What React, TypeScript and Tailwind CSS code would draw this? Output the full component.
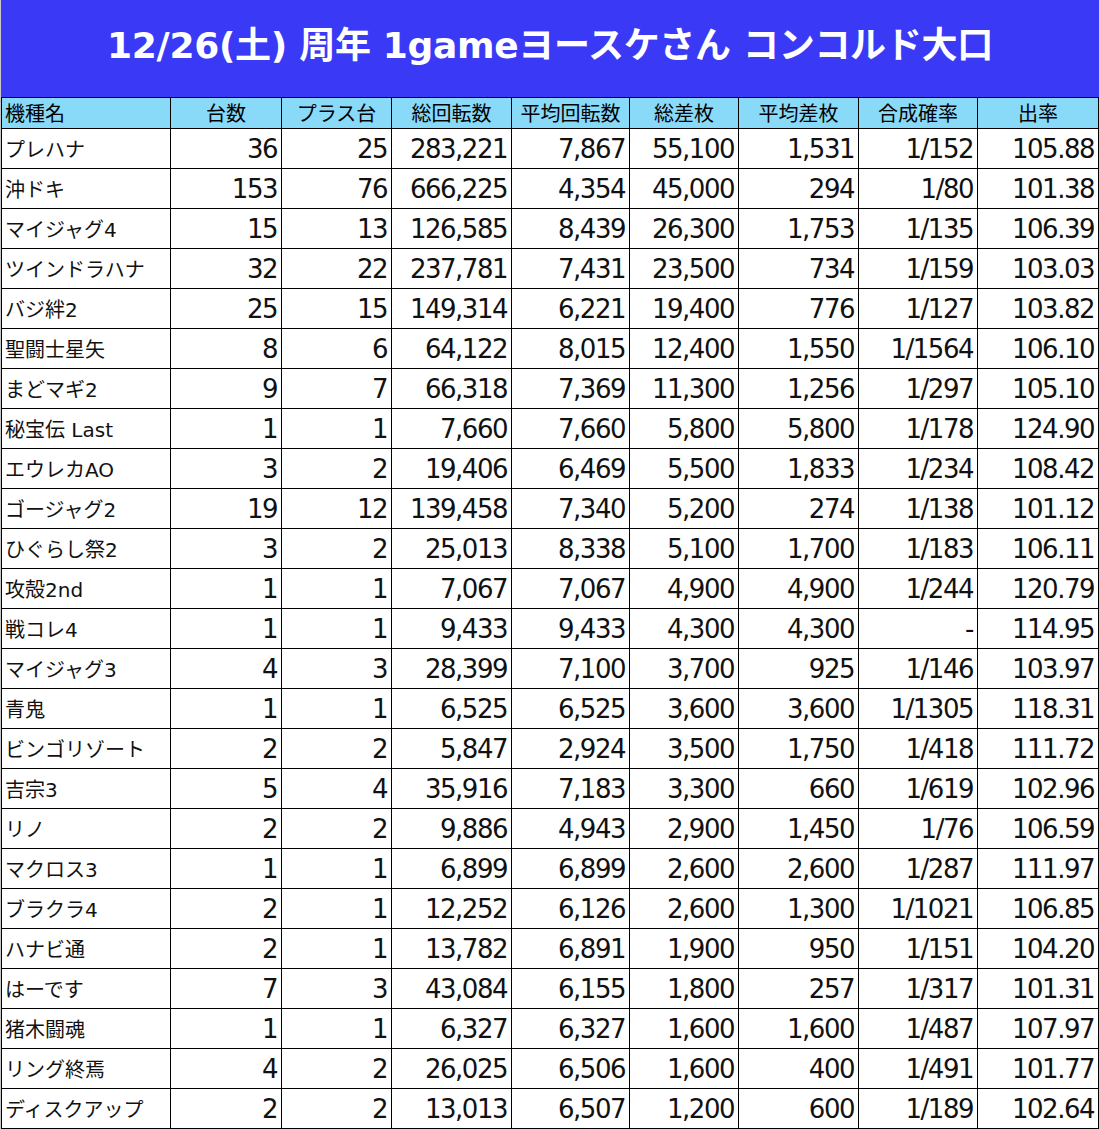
import React from "react";

const headers = [
  "機種名",
  "台数",
  "プラス台",
  "総回転数",
  "平均回転数",
  "総差枚",
  "平均差枚",
  "合成確率",
  "出率",
];

const widths = [169, 111, 110, 120, 118, 109, 120, 119, 121];

const rows: string[][] = [
  ["プレハナ", "36", "25", "283,221", "7,867", "55,100", "1,531", "1/152", "105.88"],
  ["沖ドキ", "153", "76", "666,225", "4,354", "45,000", "294", "1/80", "101.38"],
  ["マイジャグ4", "15", "13", "126,585", "8,439", "26,300", "1,753", "1/135", "106.39"],
  ["ツインドラハナ", "32", "22", "237,781", "7,431", "23,500", "734", "1/159", "103.03"],
  ["バジ絆2", "25", "15", "149,314", "6,221", "19,400", "776", "1/127", "103.82"],
  ["聖闘士星矢", "8", "6", "64,122", "8,015", "12,400", "1,550", "1/1564", "106.10"],
  ["まどマギ2", "9", "7", "66,318", "7,369", "11,300", "1,256", "1/297", "105.10"],
  ["秘宝伝 Last", "1", "1", "7,660", "7,660", "5,800", "5,800", "1/178", "124.90"],
  ["エウレカAO", "3", "2", "19,406", "6,469", "5,500", "1,833", "1/234", "108.42"],
  ["ゴージャグ2", "19", "12", "139,458", "7,340", "5,200", "274", "1/138", "101.12"],
  ["ひぐらし祭2", "3", "2", "25,013", "8,338", "5,100", "1,700", "1/183", "106.11"],
  ["攻殻2nd", "1", "1", "7,067", "7,067", "4,900", "4,900", "1/244", "120.79"],
  ["戦コレ4", "1", "1", "9,433", "9,433", "4,300", "4,300", "-", "114.95"],
  ["マイジャグ3", "4", "3", "28,399", "7,100", "3,700", "925", "1/146", "103.97"],
  ["青鬼", "1", "1", "6,525", "6,525", "3,600", "3,600", "1/1305", "118.31"],
  ["ビンゴリゾート", "2", "2", "5,847", "2,924", "3,500", "1,750", "1/418", "111.72"],
  ["吉宗3", "5", "4", "35,916", "7,183", "3,300", "660", "1/619", "102.96"],
  ["リノ", "2", "2", "9,886", "4,943", "2,900", "1,450", "1/76", "106.59"],
  ["マクロス3", "1", "1", "6,899", "6,899", "2,600", "2,600", "1/287", "111.97"],
  ["ブラクラ4", "2", "1", "12,252", "6,126", "2,600", "1,300", "1/1021", "106.85"],
  ["ハナビ通", "2", "1", "13,782", "6,891", "1,900", "950", "1/151", "104.20"],
  ["はーです", "7", "3", "43,084", "6,155", "1,800", "257", "1/317", "101.31"],
  ["猪木闘魂", "1", "1", "6,327", "6,327", "1,600", "1,600", "1/487", "107.97"],
  ["リング終焉", "4", "2", "26,025", "6,506", "1,600", "400", "1/491", "101.77"],
  ["ディスクアップ", "2", "2", "13,013", "6,507", "1,200", "600", "1/189", "102.64"],
];

const App: React.FC = () => {
  return (
    <div className="w-[1099px] min-h-[1129px] bg-white border-l border-[#c8c8c8]">
      {/* Title banner */}
      <div className="h-[97px] bg-[#3a3af6] flex items-center justify-center">
        <h1 className="text-white font-bold text-[36px] tracking-[-0.3px] font-['DejaVu_Sans','Noto_Sans_CJK_JP',sans-serif] pb-[6px]">
          12/26(土) 周年 1gameヨースケさん コンコルド大口
        </h1>
      </div>

      <table className="border-collapse table-fixed w-[1097px]">
        <colgroup>
          {widths.map((w, i) => (
            <col key={i} style={{ width: w }} />
          ))}
        </colgroup>
        <thead>
          <tr className="h-[31px] bg-[#89d9f8]">
            {headers.map((h, i) => (
              <th
                key={h}
                className={`border border-black font-normal text-[20px] leading-none text-black font-['Noto_Sans_CJK_JP',sans-serif] ${
                  i === 0 ? "text-left pl-[3px]" : "text-center"
                }`}
              >
                {h}
              </th>
            ))}
          </tr>
        </thead>
        <tbody>
          {rows.map((r) => (
            <tr key={r[0]} className="h-[40px]">
              {r.map((c, i) =>
                i === 0 ? (
                  <td
                    key={i}
                    className="border border-black text-left pl-[3px] text-[20px] leading-none text-[#111] whitespace-nowrap font-['DejaVu_Sans','Noto_Sans_CJK_JP',sans-serif] pt-[2px]"
                  >
                    {c}
                  </td>
                ) : (
                  <td
                    key={i}
                    className="border border-black text-right pr-[4px] text-[26px] tracking-[-1.5px] leading-none text-[#111] whitespace-nowrap font-['DejaVu_Sans',sans-serif]"
                  >
                    {c}
                  </td>
                )
              )}
            </tr>
          ))}
        </tbody>
      </table>
    </div>
  );
};

export default App;
